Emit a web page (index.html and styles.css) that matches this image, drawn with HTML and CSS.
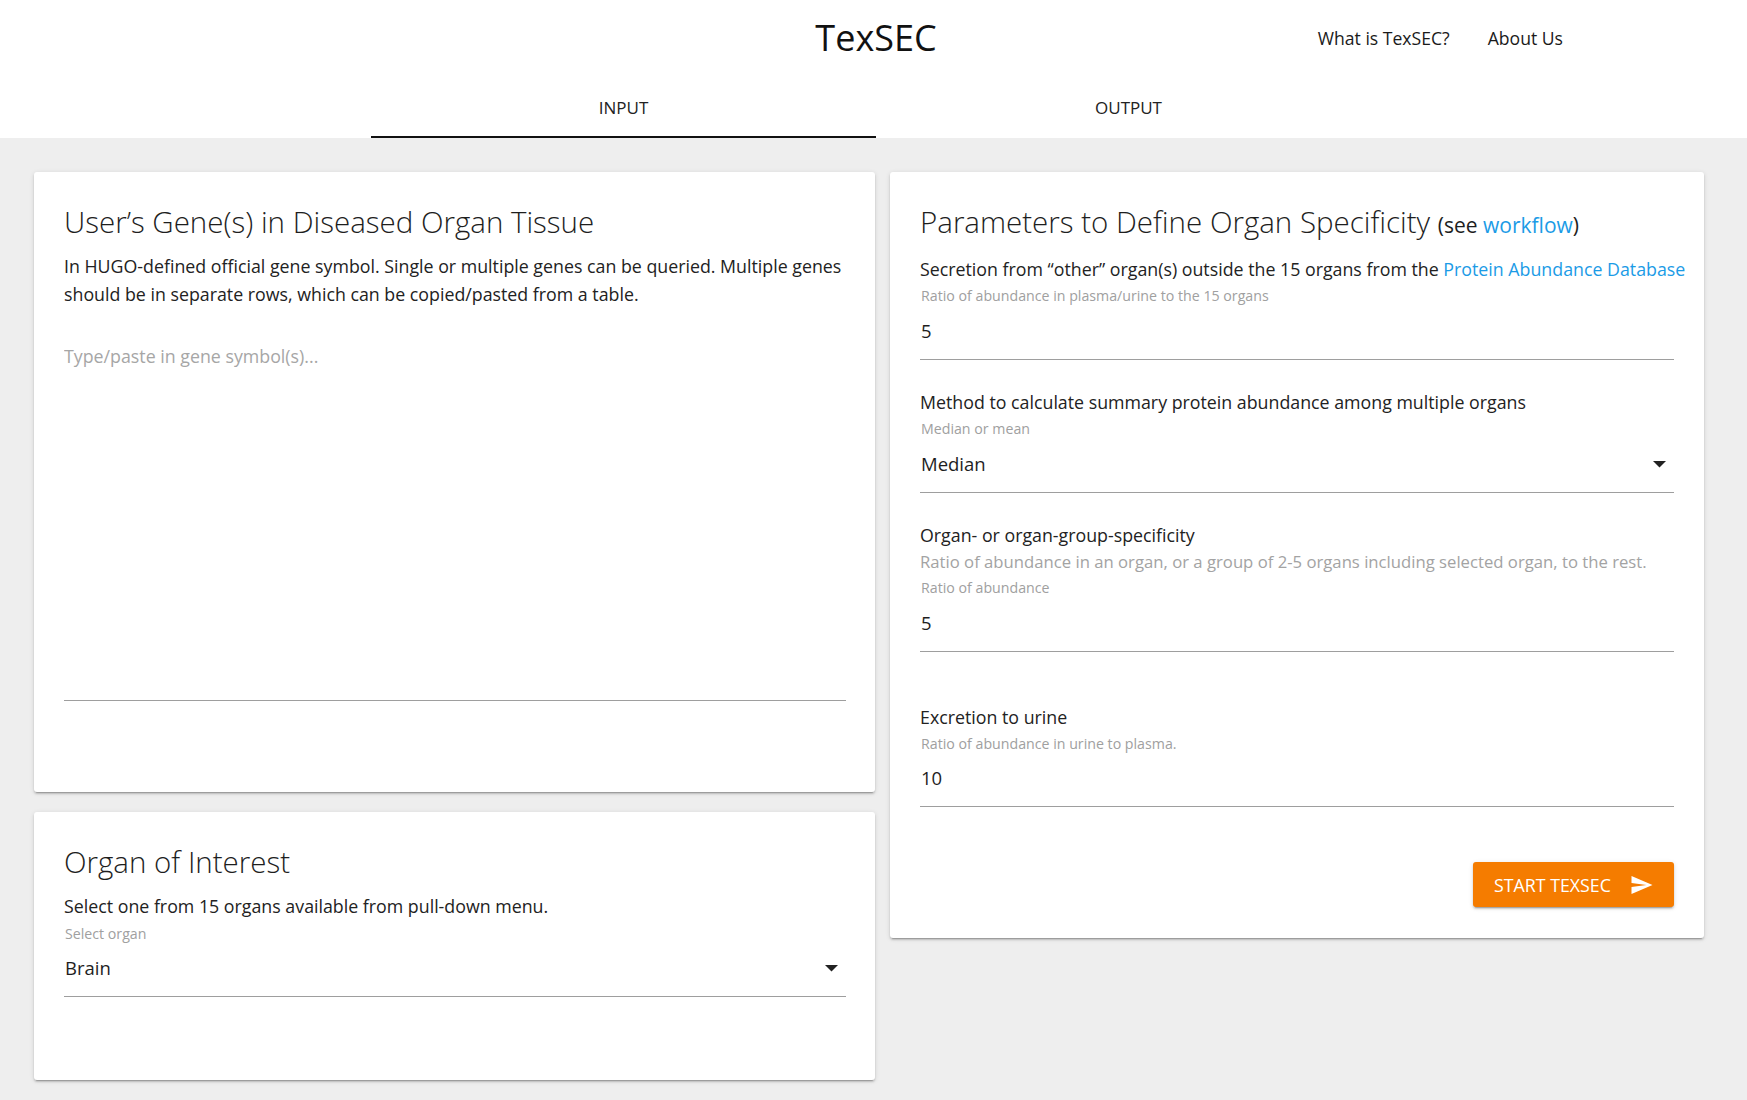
FILE: index.html
```html
<!DOCTYPE html>
<html lang="en">
<head>
<meta charset="utf-8">
<title>TexSEC</title>
<link rel="stylesheet" href="styles.css">
</head>
<body>
<header class="header">
  <div class="topbar">
    <div class="topbar-side"></div>
    <h1 class="brand">TexSEC</h1>
    <nav class="nav">
      <a class="nav-link" href="#">What is TexSEC?</a>
      <a class="nav-link" href="#">About Us</a>
    </nav>
  </div>
  <div class="tabs">
    <div class="tab tab-active">INPUT</div>
    <div class="tab">OUTPUT</div>
  </div>
</header>
<main class="main">
  <div class="col-left">
    <section class="card card-genes">
      <h2 class="card-title">User’s Gene(s) in Diseased Organ Tissue</h2>
      <p class="card-desc">In HUGO-defined official gene symbol. Single or multiple genes can be queried. Multiple genes should be in separate rows, which can be copied/pasted from a table.</p>
      <textarea class="gene-input" placeholder="Type/paste in gene symbol(s)..."></textarea>
    </section>
    <section class="card card-organ">
      <h2 class="card-title">Organ of Interest</h2>
      <p class="card-desc">Select one from 15 organs available from pull-down menu.</p>
      <div class="field-help">Select organ</div>
      <div class="field-input select">
        <span class="value">Brain</span>
        <svg class="caret" width="13" height="7" viewBox="0 0 13 7"><polygon points="0,0 13,0 6.5,6.5" fill="#222"/></svg>
      </div>
    </section>
  </div>
  <section class="card card-params">
    <h2 class="card-title">Parameters to Define Organ Specificity <span class="title-note">(see <a class="link" href="#">workflow</a>)</span></h2>
    <div class="field field-first">
      <div class="field-label">Secretion from “other” organ(s) outside the 15 organs from the <a class="link" href="#">Protein Abundance Database</a></div>
      <div class="field-help">Ratio of abundance in plasma/urine to the 15 organs</div>
      <div class="field-input"><span class="value">5</span></div>
    </div>
    <div class="field">
      <div class="field-label">Method to calculate summary protein abundance among multiple organs</div>
      <div class="field-help">Median or mean</div>
      <div class="field-input select">
        <span class="value">Median</span>
        <svg class="caret" width="13" height="7" viewBox="0 0 13 7"><polygon points="0,0 13,0 6.5,6.5" fill="#222"/></svg>
      </div>
    </div>
    <div class="field">
      <div class="field-label">Organ- or organ-group-specificity</div>
      <div class="field-desc">Ratio of abundance in an organ, or a group of 2-5 organs including selected organ, to the rest.</div>
      <div class="field-help">Ratio of abundance</div>
      <div class="field-input"><span class="value">5</span></div>
    </div>
    <div class="field field-last">
      <div class="field-label">Excretion to urine</div>
      <div class="field-help">Ratio of abundance in urine to plasma.</div>
      <div class="field-input"><span class="value">10</span></div>
    </div>
    <div class="actions">
      <button class="btn-start" type="button">
        <span>START TEXSEC</span>
        <svg class="send" width="22" height="18" viewBox="2 3 21 18"><path d="M2.01 21L23 12 2.01 3 2 10l15 2-15 2z" fill="#fff"/></svg>
      </button>
    </div>
  </section>
</main>
</body>
</html>
```

FILE: styles.css
```css
* { box-sizing: border-box; }
html, body {
  margin: 0;
  padding: 0;
  background: #eeeeee;
  font-family: "Open Sans", "Noto Sans", sans-serif;
  color: #212121;
}
.header {
  background: #fff;
}
.topbar {
  display: grid;
  grid-template-columns: 1fr auto 1fr;
  height: 76px;
}
.brand {
  margin: 0 0 0 5px;
  font-size: 36px;
  font-weight: 400;
  line-height: 76px;
  color: #111;
}
.nav {
  display: flex;
  justify-content: flex-end;
  gap: 38px;
  padding: 24px 184px 0 0;
}
.nav-link {
  font-size: 17.6px;
  line-height: 28px;
  color: #1a1a1a;
  text-decoration: none;
}
.tabs {
  display: flex;
  width: 1010px;
  margin-left: 371px;
  height: 62px;
}
.tab {
  flex: 1;
  text-align: center;
  font-size: 17px;
  line-height: 28px;
  padding-top: 18px;
  color: #222;
  border-bottom: 2px solid transparent;
}
.tab-active {
  border-bottom-color: #111;
}
.main {
  display: flex;
  align-items: flex-start;
  gap: 15px;
  padding: 34px 0 20px 34px;
}
.col-left {
  display: flex;
  flex-direction: column;
  gap: 20px;
  width: 841px;
}
.card {
  background: #fff;
  border-radius: 3px;
  box-shadow: 0 3px 1px -2px rgba(0,0,0,0.2), 0 2px 2px 0 rgba(0,0,0,0.14), 0 1px 5px 0 rgba(0,0,0,0.12);
  padding: 30px 29px 0 30px;
}
.card-genes { padding-bottom: 91px; }
.card-organ { height: 268px; }
.card-params {
  width: 814px;
  padding-right: 30px;
  padding-bottom: 31px;
}
.card-title {
  margin: 0;
  font-size: 29.5px;
  font-weight: 300;
  line-height: 40px;
  color: #1e1e1e;
}
.title-note {
  font-size: 21px;
  font-weight: 400;
}
.link {
  color: #1b9be6;
  text-decoration: none;
}
.card-desc {
  margin: 10px -4px 0 0;
  font-size: 17.8px;
  line-height: 28px;
  color: #222;
}
.gene-input {
  display: block;
  width: 100%;
  height: 359px;
  margin-top: 34px;
  padding: 0;
  border: none;
  border-bottom: 1px solid #9e9e9e;
  resize: none;
  outline: none;
  font-family: inherit;
  font-size: 17.8px;
  line-height: 28px;
  color: #222;
  background: transparent;
}
.gene-input::placeholder {
  color: #a6a6a6;
}
.field { margin-top: 28px; }
.field-first { margin-top: 10px; }
.field-last { margin-top: 51px; }
.field-label {
  margin-right: -20px;
  font-size: 17.8px;
  line-height: 28px;
  color: #222;
  white-space: nowrap;
}
.field-desc {
  font-size: 16.7px;
  line-height: 26px;
  color: #a3a3a3;
}
.field-help {
  margin-top: 3px;
  padding-left: 1px;
  font-size: 14.2px;
  line-height: 20px;
  color: #a0a0a0;
}
.card-organ .field-help { margin-top: 4px; }
.field-input {
  display: flex;
  align-items: center;
  margin-top: 11px;
  padding: 0 0 14px 1px;
  border-bottom: 1px solid #9e9e9e;
}
.field-last .field-input { margin-top: 10px; }
.card-organ .field-input { margin-top: 10px; }
.value {
  flex: 1;
  font-size: 18.5px;
  line-height: 28px;
  color: #1e1e1e;
}
.caret {
  margin-right: 8px;
}
.actions {
  display: flex;
  justify-content: flex-end;
  margin-top: 55px;
}
.btn-start {
  display: flex;
  align-items: center;
  justify-content: space-between;
  width: 201px;
  height: 45px;
  padding: 0 21px 0 21px;
  border: none;
  border-radius: 3px;
  background: #f57c00;
  color: #fff;
  font-family: inherit;
  font-size: 17.8px;
  letter-spacing: 0;
  box-shadow: 0 3px 1px -2px rgba(0,0,0,0.2), 0 2px 2px 0 rgba(0,0,0,0.14), 0 1px 5px 0 rgba(0,0,0,0.12);
}
.send { display: block; }
```
